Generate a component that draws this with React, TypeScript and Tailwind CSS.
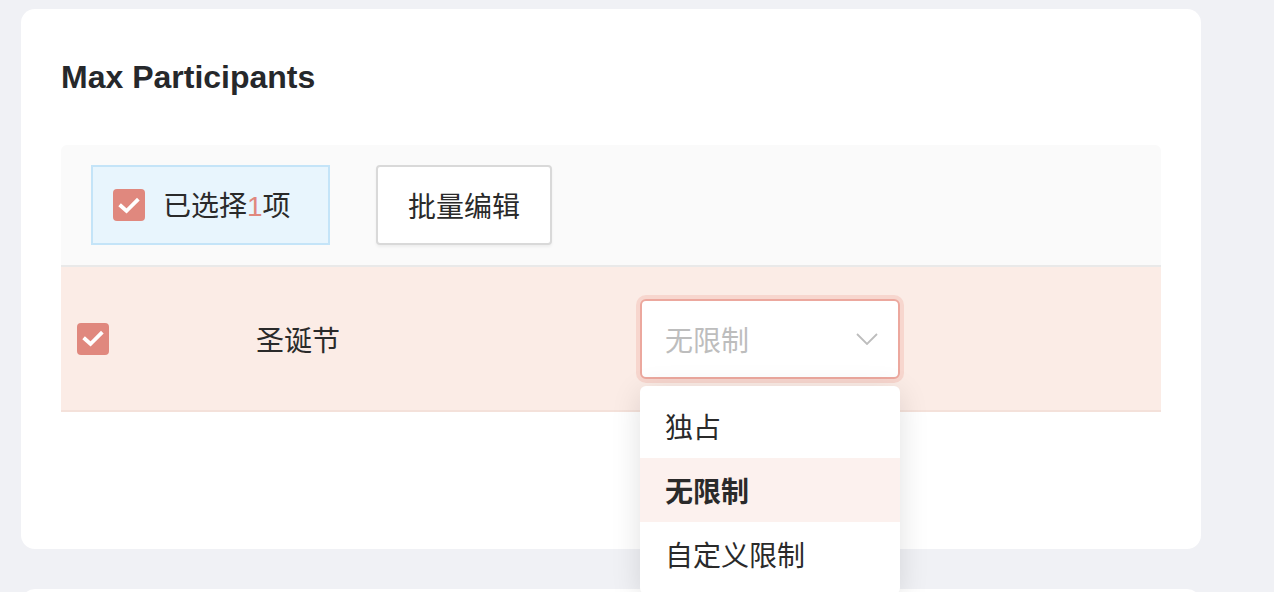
import React from "react";

const CJK = { fontFamily: '"Noto Sans CJK SC", "Noto Sans", sans-serif' };

function Check({ className }: { className: string }) {
  return (
    <span className={`flex items-center justify-center rounded-[4px] bg-[#e0887e] ${className}`}>
      <svg width="22" height="17" viewBox="0 0 22 17" fill="none">
        <path d="M3 9 L8.5 14 L19 3.5" stroke="white" strokeWidth="3.8" strokeLinecap="square" strokeLinejoin="miter" />
      </svg>
    </span>
  );
}

export default function App() {
  return (
    <div className="h-[592px] w-[1274px] overflow-hidden bg-[#f0f1f5] pl-[21px] pt-[9px]" style={CJK}>
      <div className="relative h-[540px] w-[1180px] rounded-[14px] bg-white px-[40px] pt-[48px]">
        <div
          className="h-[40px] text-[32px] font-bold leading-[40px] text-[#26282b]"
          style={{ fontFamily: '"Liberation Sans", "Noto Sans CJK SC", sans-serif' }}
        >
          Max Participants
        </div>
        <div className="mt-[48px] w-[1100px]">
          {/* toolbar */}
          <div className="flex h-[122px] items-start gap-[46px] rounded-t-[6px] border-b-2 border-[#e9e9e9] bg-[#fafafa] pl-[30px] pt-[20px]">
            <div className="flex h-[80px] w-[239px] items-center border-2 border-[#c4e4f8] bg-[#e8f5fd] pl-[20px]">
              <Check className="h-[32px] w-[32px]" />
              <span className="ml-[18px] text-[28px] leading-none text-[#2a2a2a]">
                已选择
                <span className="text-[#e0887e]" style={{ fontFamily: '"Liberation Sans", sans-serif' }}>
                  1
                </span>
                项
              </span>
            </div>
            <div className="flex h-[80px] w-[176px] items-center justify-center rounded-[4px] border-2 border-[#d9d9d9] bg-white text-[28px] text-[#2a2a2a] shadow-[0_2px_3px_rgba(0,0,0,0.05)]">
              批量编辑
            </div>
          </div>
          {/* row */}
          <div className="relative flex h-[145px] items-center border-b-2 border-[#f4e1da] bg-[#fbece6]">
            <Check className="ml-[16px] h-[32px] w-[32px]" />
            <span className="ml-[147px] w-[384px] text-[28px] text-[#2a2a2a]">圣诞节</span>
            <div className="relative">
              <div className="flex h-[80px] w-[260px] items-center justify-between rounded-[6px] border-2 border-[#eca89e] bg-white pl-[23px] pr-[20px] shadow-[0_0_0_4px_#f7d6ce]">
                <span className="text-[28px] text-[#bdbdbd]">无限制</span>
                <svg width="22" height="12" viewBox="0 0 22 12" fill="none">
                  <path d="M1 1 L11 11 L21 1" stroke="#bdbdbd" strokeWidth="1.8" />
                </svg>
              </div>
              <div className="absolute left-0 top-[87px] z-10 w-[260px] rounded-[6px] bg-white py-[8px] shadow-[0_6px_30px_rgba(0,0,0,0.12)]">
                <div className="flex h-[64px] items-center pl-[25px] text-[28px] text-[#2a2a2a]">独占</div>
                <div className="flex h-[64px] items-center bg-[#fcf1ee] pl-[25px] text-[28px] font-bold text-[#2a2a2a]">无限制</div>
                <div className="flex h-[64px] items-center pl-[25px] text-[28px] text-[#2a2a2a]">自定义限制</div>
              </div>
            </div>
          </div>
        </div>
      </div>
      <div className="mt-[40px] h-[200px] w-[1180px] rounded-[14px] bg-white" />
    </div>
  );
}
